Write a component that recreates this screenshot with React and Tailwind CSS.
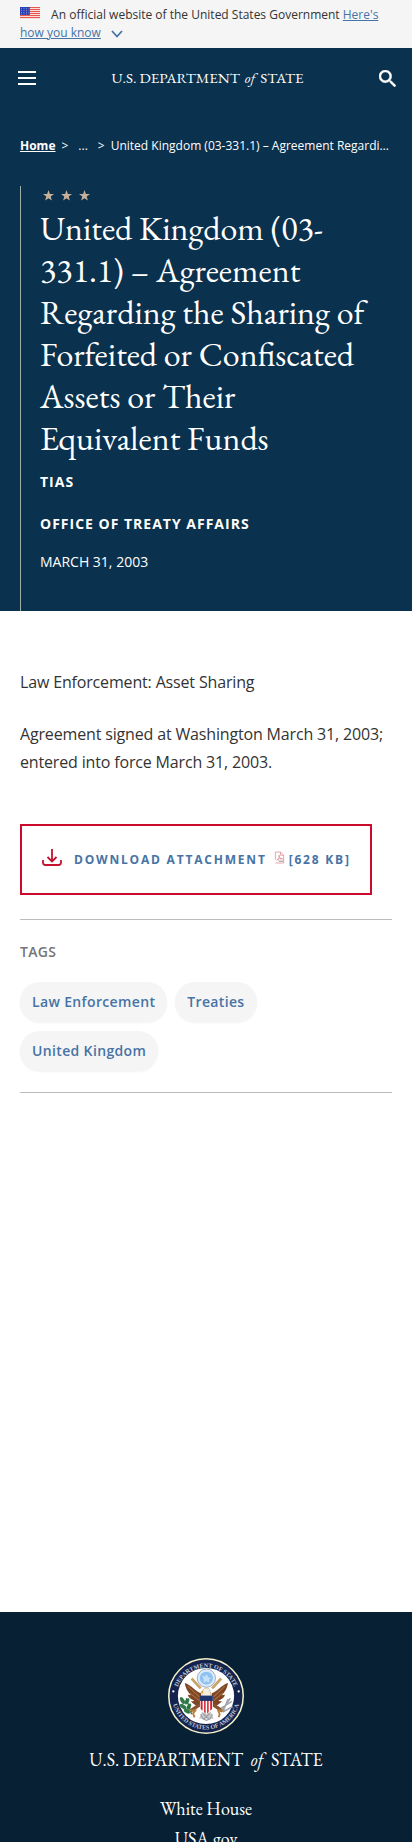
const serif = 'font-["EB_Garamond","Liberation_Serif",serif]';

function Flag() {
  return (
    <svg viewBox="0 0 20 12" className="mr-2 inline-block h-3 w-5 align-baseline" role="img" aria-label="U.S. flag">
      <rect width="20" height="12" fill="#fff" />
      {[0, 2, 4, 6, 8, 10].map((y) => (
        <rect key={y} y={y} width="20" height="1.200" fill="#e4574a" />
      ))}
      <rect width="10" height="8" fill="#2a3fb0" />
      {[1.2, 3.2, 5.2, 7].map((y) =>
        [1.5, 4, 6.5, 9].map((x) => <circle key={`${x}-${y}`} cx={x} cy={y} r="0.450" fill="#cfd6ff" />)
      )}
    </svg>
  );
}

function Star() {
  return (
    <svg viewBox="0 0 24 24" className="h-[11px] w-[11px]" fill="#c9b199" aria-hidden="true">
      <path d="M12 0l3 8.6 9 .2-7.200 5.500 2.600 8.800L12 17.900l-7.400 5.200 2.600-8.800L0 8.800l9-.2z" />
    </svg>
  );
}

function Seal() {
  return (
    <svg viewBox="0 0 200 200" className="h-19 w-19" role="img" aria-label="Seal of the U.S. Department of State">
      <defs>
        <path id="sealTop" d="M21 104a79 79 0 0 1 158 0" />
        <path id="sealBottom" d="M10 98a90 90 0 0 0 180 0" />
      </defs>
      <circle cx="100" cy="100" r="98" fill="#14234d" stroke="#f4f1c9" strokeWidth="4" />
      <circle cx="100" cy="100" r="74" fill="#fff" />
      <g fill="#c3cadb" fontFamily="Liberation Serif, serif" fontSize="16" fontWeight="700" textAnchor="middle">
        <text><textPath href="#sealTop" startOffset="50%">DEPARTMENT OF STATE</textPath></text>
        <text><textPath href="#sealBottom" startOffset="50%">UNITED STATES OF AMERICA</textPath></text>
      </g>
      <circle cx="14" cy="88" r="3" fill="#fff" />
      <circle cx="186" cy="88" r="3" fill="#fff" />
      <circle cx="101" cy="53" r="24" fill="#dceaf6" stroke="#8d98ad" strokeWidth="2" />
      <circle cx="101" cy="53" r="17" fill="#8cc1f2" />
      <path d="M90 46l7 3 5-6 4 8 8 1-6 5 1 8-8-4-8 4 1-8z" fill="#c5e0f8" />
      <path d="M62 54l24 26M140 54l-24 26" stroke="#c8a468" strokeWidth="7" />
      <g fill="#7b4526">
        <path d="M44 66c8 2 16 8 24 15 7 6 12 10 19 12l-2 36c-10-3-20-8-25-15 4 0 7 0 9-2-9-2-15-8-17-15l8 1c-8-8-14-20-16-32z" />
        <path d="M158 66c-8 2-16 8-24 15-7 6-12 10-19 12l2 36c10-3 20-8 25-15-4 0-7 0-9-2 9-2 15-8 17-15l-8 1c8-8 14-20 16-32z" />
      </g>
      <path d="M52 74l30 28M58 92l24 20M150 74l-30 28M144 92l-24 20" stroke="#a96b3a" strokeWidth="3" />
      <path d="M92 84c4-7 16-7 18 1l4 16H88z" fill="#f6efdf" stroke="#b99b72" strokeWidth="1.500" />
      <path d="M92 86l-8 4 9 3z" fill="#d99a2b" />
      <path d="M82 124l-24 16M120 124l24 16" stroke="#8a522c" strokeWidth="9" />
      <path d="M90 140l-8 20h38l-8-20z" fill="#c8c8c8" />
      <path d="M84 100h34v32c0 8-10 12-17 15-7-3-17-7-17-15z" fill="#fff" />
      <path d="M86 110h5v29l-5-5zM95 110h4v36l-4-3zM103 110h4v33l-4 3zM111 110h5v24l-5 5z" fill="#cc2430" />
      <path d="M84 99h34v14H84z" fill="#20366e" />
      <g fill="#2f7a4a">
        <ellipse cx="38" cy="112" rx="5" ry="10" transform="rotate(-30 38 112)" />
        <ellipse cx="50" cy="114" rx="5" ry="9" transform="rotate(30 50 114)" />
        <ellipse cx="40" cy="128" rx="5" ry="10" transform="rotate(-55 40 128)" />
        <ellipse cx="55" cy="128" rx="5" ry="9" transform="rotate(25 55 128)" />
        <ellipse cx="50" cy="140" rx="5" ry="9" transform="rotate(-60 50 140)" />
      </g>
      <path d="M48 106l14 42" stroke="#2f6b3d" strokeWidth="3" />
      <path d="M142 138l22-32M146 138l12-30M140 132l28-18M144 142l26-14" stroke="#a2a4ab" strokeWidth="4" />
      <path d="M56 138h16l-6 8 4 10M146 138h-14l4 10-3 8" fill="none" stroke="#b5803c" strokeWidth="5" />
      <path d="M86 148l6 12 9 4 10-4 6-12M92 146l18 16M110 146l-18 16" fill="none" stroke="#9d9fa6" strokeWidth="3" />
    </svg>
  );
}

function Wordmark({ size, ofGap }) {
  return (
    <span className={`whitespace-nowrap text-white ${serif} ${size}`}>
      U.S. DEPARTMENT <i className={ofGap}>of</i> STATE
    </span>
  );
}

const tags = ["Law Enforcement", "Treaties", "United Kingdom"];

export default function App() {
  return (
    <div className='min-h-screen bg-white font-["Open_Sans",sans-serif] text-[#333]'>
      <aside className="bg-[#f5f5f5] px-5 pt-1.5 pb-1.5 text-xs leading-[18px]">
        <Flag /> An official website of the United States Government{" "}
        <a href="#how-you-know" className="text-[#4773a5]">
          <span className="underline">Here's how you know</span>
          <svg viewBox="0 0 12 8" className="ml-2.5 inline-block h-2 w-3" fill="none" stroke="#4773a5" strokeWidth="1.800" aria-hidden="true">
            <path d="M1 1l5 5.500 5-5.500" />
          </svg>
        </a>
      </aside>

      <div className="bg-[#0a314d] text-white">
        <header className="flex h-15 items-center justify-between pr-4 pl-4.5">
          <button type="button" aria-label="Menu" className="flex w-[18px] flex-col gap-1">
            <span className="h-[2px] bg-white" />
            <span className="h-[2px] bg-white" />
            <span className="h-[2px] bg-white" />
          </button>
          <a href="#home" className="pb-0.5"><Wordmark size="text-[15px]" ofGap="mx-0.5" /></a>
          <button type="button" aria-label="Search">
            <svg viewBox="3 3 17.500 17.500" className="h-[17px] w-[17px]" fill="#fff" stroke="#fff" strokeWidth=".5" aria-hidden="true">
              <path d="M15.500 14h-.79l-.28-.27A6.471 6.471 0 0 0 16 9.500 6.500 6.500 0 1 0 9.500 16c1.610 0 3.090-.59 4.230-1.570l.27.28v.79l5 4.990L20.490 19l-4.990-5zm-6 0C7.010 14 5 11.990 5 9.500S7.010 5 9.500 5 14 7.010 14 9.500 11.990 14 9.500 14z" />
            </svg>
          </button>
        </header>

        <nav aria-label="Breadcrumb" className="px-5 pt-7 text-xs leading-5">
          <ol className="flex">
            <li><a href="#home" className="font-bold underline">Home</a></li>
            <li className="ml-1.5">&gt;</li>
            <li className="ml-2.5">...</li>
            <li className="ml-2.5">&gt;</li>
            <li className="ml-1.5 min-w-0 truncate">United Kingdom (03-331.1) – Agreement Regarding the Sharing of Forfeited or Confiscated Assets</li>
          </ol>
        </nav>

        <div className="pt-[30px] pl-5">
          <div className="border-l border-[#9caea6] pr-9 pb-[39px] pl-[19px]">
            <div className="flex gap-[7px] pt-1 pl-[3px]">
              <Star /><Star /><Star />
            </div>
            <h1 className={`mt-1.5 text-[34px] leading-[42px] ${serif}`}>
              United Kingdom (03-331.1) – Agreement Regarding the Sharing of Forfeited or Confiscated Assets or Their Equivalent Funds
            </h1>
            <p className="mt-[13px] text-sm leading-5 font-bold tracking-[1px]">TIAS</p>
            <p className="mt-[22px] text-sm leading-5 font-bold tracking-[1px]">OFFICE OF TREATY AFFAIRS</p>
            <p className="mt-[18px] text-sm leading-5">MARCH 31, 2003</p>
          </div>
        </div>
      </div>

      <main className="px-5 pt-[57px] pb-[519px]">
        <p className="leading-7 tracking-[-0.01em]">Law Enforcement: Asset Sharing</p>
        <p className="mt-6 leading-7 tracking-[-0.01em]">
          Agreement signed at Washington March 31, 2003; entered into force March 31, 2003.
        </p>
        <a href="#attachment" className="mt-12 inline-flex h-[71px] items-center border-2 border-[#cb0a2c] pr-[19px] pl-5 text-xs font-bold tracking-[0.15em] whitespace-nowrap text-[#4773a5]">
          <svg viewBox="0 0 20 17" className="mr-3 h-[17px] w-5 -translate-y-0.5" fill="none" stroke="#c41230" strokeWidth="1.800" aria-hidden="true">
            <path d="M10 0v12M5.500 8l4.500 4.500L14.500 8M1 11v2.500q0 2.500 2.500 2.500h13q2.500 0 2.500-2.500V11" />
          </svg>
          DOWNLOAD ATTACHMENT
          <svg viewBox="0 0 12 13" className="mr-1 ml-[7px] h-[13px] w-[11px] -translate-y-0.5" fill="none" stroke="#d9737c" strokeWidth=".700" aria-hidden="true">
            <path d="M1.500 9V.5H7l3.500 3.500v8.500h-9M7 .5V4h3.500M3 9.500c2-1 3-3 2.500-5.500 0 3 2 4 4 4-2-.5-5 0-6.500 1.500z" />
            <path d="M5 10.500h5" stroke="#555" />
          </svg>
          [628 KB]
        </a>
        <section className="mt-6 border-y border-[#bcbcbc] pt-5 pb-[21px]">
          <h2 className="text-sm leading-6 font-semibold tracking-wide text-[#757575]">TAGS</h2>
          <ul className="mt-[18px] flex flex-wrap gap-x-2 gap-y-[9px]">
            {tags.map((t) => (
              <li key={t}>
                <a href="#tag" className="block rounded-[20px] bg-[#f5f5f5] px-3 text-sm leading-[40px] font-semibold tracking-wide text-[#4773a5] shadow-xs">{t}</a>
              </li>
            ))}
          </ul>
        </section>
      </main>

      <footer className="flex flex-col items-center bg-[#082034] pt-[46px] text-white">
        <Seal />
        <div className="mt-3 leading-7"><Wordmark size="text-[18px]" ofGap="mx-1" /></div>
        <nav aria-label="Footer" className={`mt-5 flex flex-col items-center text-[18px] leading-[30px] ${serif}`}>
          <a href="#whitehouse">White House</a>
          <a href="#usa">USA.gov</a>
        </nav>
      </footer>
    </div>
  );
}
